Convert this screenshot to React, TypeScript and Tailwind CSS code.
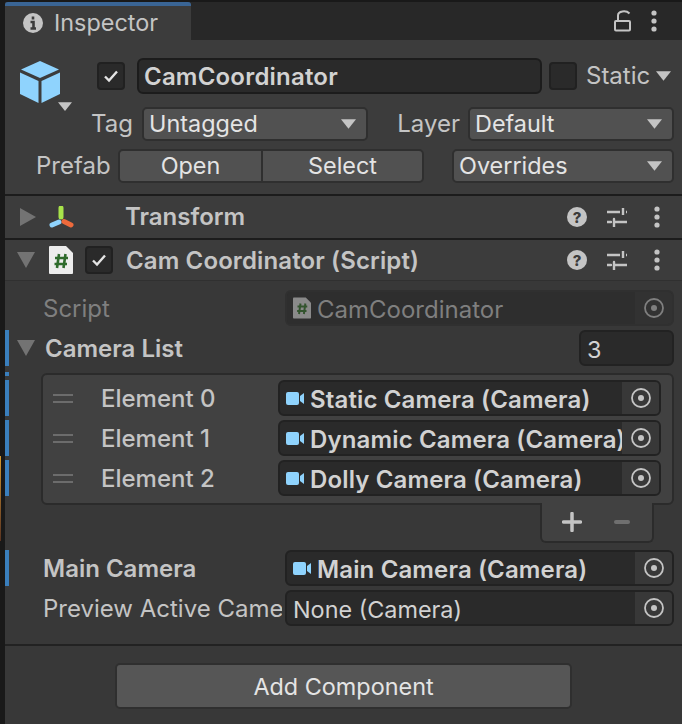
import type { ReactNode } from "react";

const Caret = ({ className }: { className: string }) => (
  <svg viewBox="0 0 16 10" className={className}>
    <path d="M0 0H16L8 10Z" fill="currentColor" />
  </svg>
);

const Fold = ({ open }: { open: boolean }) => (
  <svg viewBox="0 0 18 18" className="h-[18px] w-[18px] text-[#737373]">
    <path d={open ? "M0 1H18L9 17Z" : "M1 0L17 9L1 18Z"} fill="currentColor" />
  </svg>
);

const Check = ({ checked }: { checked: boolean }) => (
  <div className="flex h-7 w-7 shrink-0 items-center justify-center rounded-[4px] border-2 border-[#212121] bg-[#2a2a2a]">
    {checked && (
      <svg viewBox="0 0 16 14" className="h-[14px] w-4">
        <path d="M2 7.5L6 11.5L14 2.5" fill="none" stroke="#e4e4e4" strokeWidth="2.4" />
      </svg>
    )}
  </div>
);

const Kebab = () => (
  <svg viewBox="0 0 6 22" className="h-[22px] w-[6px]">
    <circle cx="3" cy="3" r="2.6" fill="#c4c4c4" />
    <circle cx="3" cy="11" r="2.6" fill="#c4c4c4" />
    <circle cx="3" cy="19" r="2.6" fill="#c4c4c4" />
  </svg>
);

const Lock = () => (
  <svg viewBox="0 0 18 22" className="h-[22px] w-[18px]" fill="none" stroke="#c4c4c4" strokeWidth="2">
    <rect x="1" y="11" width="15" height="9.5" rx="1" />
    <path d="M4 11V5.5C4 1 12 0 15.5 3.5" />
  </svg>
);

const HeaderIcons = () => (
  <div className="ml-auto flex items-center">
    <svg viewBox="0 0 20 20" className="h-5 w-5">
      <circle cx="10" cy="10" r="10" fill="#c4c4c4" />
      <text x="10" y="15.5" textAnchor="middle" fontSize="15" fontWeight="800" fill="#3c3c3c" fontFamily="Inter, sans-serif">
        ?
      </text>
    </svg>
    <svg viewBox="0 0 20 20" className="ml-5 h-5 w-5" stroke="#c4c4c4" strokeWidth="2.4" fill="none">
      <path d="M0 5H13M16 1V8M19 5H20" />
      <path d="M0 15H4M7 12V20M7 15H20" strokeLinecap="round" />
    </svg>
    <div className="mr-[22px] ml-[27px] flex">
      <Kebab />
    </div>
  </div>
);

const Picker = ({ dim }: { dim?: boolean }) => (
  <div className={`flex w-[37px] shrink-0 items-center justify-center self-stretch rounded-r-[4px] ${dim ? "bg-[#323232]" : "bg-[#383838]"}`}>
    <svg viewBox="0 0 20 20" className="h-5 w-5">
      <circle cx="10" cy="10" r="9" fill="none" stroke={dim ? "#7f7f7f" : "#c4c4c4"} strokeWidth="1.800" />
      <circle cx="10" cy="10" r="3" fill={dim ? "#7f7f7f" : "#c4c4c4"} />
    </svg>
  </div>
);

const CamIcon = () => (
  <svg viewBox="0 0 18 13" className="h-[13px] w-[18px] shrink-0">
    <rect x="0" y="0" width="13" height="13" rx="2" fill="#8fd3fd" />
    <path d="M14 4L18 1V12L14 9Z" fill="#8fd3fd" />
  </svg>
);

const ScriptIcon = ({ dim }: { dim?: boolean }) => (
  <svg viewBox="0 0 24 28" className={dim ? "h-[22px] w-[18px] shrink-0" : "h-7 w-6 shrink-0"}>
    <path d="M1 0H17L24 7V27Q24 28 23 28H1Q0 28 0 27V1Q0 0 1 0Z" fill={dim ? "#8a8a8a" : "#ededed"} />
    <path d="M10 8L8 22M16.500 8L14.500 22M6 12H19M5.500 18H18" stroke={dim ? "#33542e" : "#2f6b2c"} strokeWidth="2.600" fill="none" />
  </svg>
);

const Dropdown = ({ label, className }: { label: string; className: string }) => (
  <div className={`flex h-[34px] items-center justify-between rounded-[5px] border-2 border-[#2f2f2f] bg-[#515151] pr-[10px] pl-[5px] ${className}`}>
    <span className="text-[#e4e4e4]">{label}</span>
    <Caret className="h-[10px] w-[15px] text-[#c4c4c4]" />
  </div>
);

const ObjectField = ({
  icon,
  text,
  bold,
  width,
  dim,
}: {
  icon?: ReactNode;
  text: string;
  bold?: boolean;
  width: string;
  dim?: boolean;
}) => (
  <div className={`flex h-9 items-center rounded-[6px] border-2 ${dim ? "border-[#303030] bg-[#2e2e2e]" : "border-[#222222] bg-[#2a2a2a]"} ${width}`}>
    <div className="flex w-0 flex-1 items-center gap-[6px] pl-[6px] whitespace-nowrap">
      {icon}
      <span className={`pt-[4px] ${bold ? "text-[24px] font-semibold tracking-[0.14px]" : ""} ${dim ? "text-[24px] text-[#7f7f7f]" : "text-[#d2d2d2]"}`}>
        {text}
      </span>
    </div>
    <Picker dim={dim} />
  </div>
);

const ListRow = ({ label, value }: { label: string; value: string }) => (
  <div className="flex h-9 items-center">
    <div className="ml-[10px] flex w-5 flex-col gap-[5px]">
      <div className="h-[2px] bg-[#6c6c6c]" />
      <div className="h-[2px] bg-[#6c6c6c]" />
    </div>
    <span className="ml-[28px] w-[177px] pt-[2px] text-[24px] font-medium text-[#c4c4c4]">{label}</span>
    <ObjectField icon={<CamIcon />} text={value} width="w-[383px]" bold />
  </div>
);

const Bar = ({ className }: { className: string }) => <div className={`w-1 bg-[#3a7fbd] ${className}`} />;

export default function App() {
  return (
    <div className="flex h-[724px] w-[682px] overflow-hidden bg-[#191919] font-['Inter',sans-serif] text-[23.4px] leading-[30px] text-[#c4c4c4]">
      <div className="w-[5px] shrink-0 pt-[456px]">
        <div className="h-[85px] w-px bg-gradient-to-b from-[#d89a2c] to-[#5a3420]" />
      </div>
      <div className="flex min-w-0 flex-1 flex-col">
        <div className="mt-[2px] flex h-[38px] shrink-0 bg-[#282828]">
          <div className="flex w-[186px] flex-col rounded-t-[3px] bg-[#3c3c3c]">
            <div className="h-1 rounded-t-[3px] bg-[#3a6595]" />
            <div className="flex flex-1 items-center gap-[11px] pl-[18px]">
              <svg viewBox="0 0 20 20" className="h-5 w-5">
                <circle cx="10" cy="10" r="10" fill="#c4c4c4" />
                <path d="M10 3.500V6.500M7.500 9H10.500V15M7.500 15.500H13" stroke="#3c3c3c" strokeWidth="2.600" fill="none" />
              </svg>
              <span>Inspector</span>
            </div>
          </div>
          <div className="ml-auto flex items-center gap-[19px] pr-[25px]">
            <Lock />
            <Kebab />
          </div>
        </div>

        <div className="flex h-[156px] shrink-0 flex-col border-b-2 border-[#1c1c1c] bg-[#3c3c3c]">
          <div className="mt-[18px] flex h-9 items-center">
            <div className="relative mt-[12px] ml-[15px] h-[42px] w-[40px] shrink-0">
              <svg viewBox="0 0 40 42" className="h-[42px] w-[40px]">
                <path d="M20 0L39 8.500L20 17L1 8.500Z" fill="#8fd3fd" />
                <path d="M0 11.500L18.500 20V42L0 33Z" fill="#8fd3fd" />
                <path d="M21.500 20L40 11.500V33L21.500 42Z" fill="#8fd3fd" />
              </svg>
              <Caret className="absolute top-[41px] left-[38px] h-[9px] w-[14px] text-[#c4c4c4]" />
            </div>
            <div className="ml-[37px]">
              <Check checked />
            </div>
            <div className="ml-3 flex h-9 w-[405px] items-center rounded-[6px] border-2 border-[#1c1c1c] bg-[#2a2a2a] pt-[1px] pl-[5px] text-[24px] font-semibold tracking-[0.2px] text-[#d2d2d2]">
              CamCoordinator
            </div>
            <div className="ml-[7px]">
              <Check checked={false} />
            </div>
            <span className="ml-[9px] w-[64px] text-[24px]">Static</span>
            <Caret className="ml-[6px] h-[10px] w-[15px] text-[#c4c4c4]" />
          </div>

          <div className="mt-[13px] flex items-center">
            <span className="w-[128px] text-right text-[24px]">Tag</span>
            <Dropdown label="Untagged" className="ml-[9px] w-[226px]" />
            <span className="ml-[28px] w-[64px] text-right text-[24px]">Layer</span>
            <Dropdown label="Default" className="ml-2 w-[206px]" />
          </div>

          <div className="mt-2 flex items-center">
            <span className="ml-[31px] w-[82px] text-[24px]">Prefab</span>
            <div className="flex h-[34px] w-[306px] overflow-hidden rounded-[5px] border-2 border-[#2f2f2f] bg-[#515151] text-[#e4e4e4]">
              <div className="flex w-[143px] items-center justify-center border-r-2 border-[#2f2f2f]">Open</div>
              <div className="flex flex-1 items-center justify-center">Select</div>
            </div>
            <Dropdown label="Overrides" className="ml-7 w-[222px]" />
          </div>
        </div>

        <div className="flex h-[44px] shrink-0 items-center border-b-2 border-[#1c1c1c] bg-[#3c3c3c]">
          <div className="ml-[14px] flex w-[29px]">
            <Fold open={false} />
          </div>
          <svg viewBox="0 0 26 22" className="h-[22px] w-[26px]">
            <path d="M13 2V11" stroke="#a8e34a" strokeWidth="5" strokeLinecap="round" />
            <path d="M4 19L11 16" stroke="#8fd3fd" strokeWidth="5" strokeLinecap="round" />
            <path d="M16 15.500L23 19" stroke="#ee6a3c" strokeWidth="5" strokeLinecap="round" />
          </svg>
          <span className="ml-[51px] text-[24px] font-semibold">Transform</span>
          <HeaderIcons />
        </div>

        <div className="flex h-[41px] shrink-0 items-center border-b border-[#303030] bg-[#3c3c3c]">
          <div className="mr-[14px] ml-[12px] flex">
            <Fold open />
          </div>
          <ScriptIcon />
          <div className="ml-3">
            <Check checked />
          </div>
          <span className="ml-[13px] pt-[2px] text-[24px] font-semibold tracking-[0.12px]">Cam Coordinator (Script)</span>
          <HeaderIcons />
        </div>

        <div className="flex flex-1 flex-col bg-[#383838]">
          <div className="mt-[9px] flex items-center">
            <span className="ml-[38px] w-[242px] pt-[2px] text-[24px] text-[#7f7f7f]">Script</span>
            <ObjectField icon={<ScriptIcon dim />} text="CamCoordinator" width="w-[389px]" dim />
          </div>

          <div className="mt-1 flex h-9 items-center">
            <Bar className="h-9" />
            <div className="ml-2 flex">
              <Fold open />
            </div>
            <span className="ml-[10px] pt-[2px] text-[24px] font-semibold">Camera List</span>
            <div className="mr-2 ml-auto flex h-9 w-[95px] items-center rounded-[6px] border-2 border-[#222222] bg-[#2a2a2a] pt-[4px] pl-[6px] text-[#d2d2d2]">
              3
            </div>
          </div>

          <div className="flex">
            <div className="flex w-1 flex-col pt-[6px]">
              <Bar className="h-1" />
              <Bar className="mt-1 h-9" />
              <Bar className="mt-1 h-9" />
              <Bar className="mt-1 h-9" />
            </div>
            <div className="mt-[7px] ml-[32px] flex h-[132px] w-[633px] flex-col gap-1 rounded-[6px] border-2 border-[#2b2b2b] bg-[#414141] pt-[5px]">
              <ListRow label="Element 0" value="Static Camera (Camera)" />
              <ListRow label="Element 1" value="Dynamic Camera (Camera)" />
              <ListRow label="Element 2" value="Dolly Camera (Camera)" />
            </div>
          </div>

          <div className="-mt-[2px] ml-[535px] flex h-10 w-[114px] items-center rounded-b-[6px] border-2 border-t-0 border-[#2b2b2b] bg-[#414141] pl-[20px]">
            <svg viewBox="0 0 20 20" className="h-5 w-5">
              <path d="M1.500 10H18.500M10 1.500V18.500" stroke="#c4c4c4" strokeWidth="3.500" strokeLinecap="round" />
            </svg>
            <div className="ml-[32px] h-1 w-4 rounded-full bg-[#6f6f6f]" />
          </div>

          <div className="mt-[7px] flex h-9 items-center">
            <Bar className="h-9" />
            <span className="ml-[34px] w-[242px] pt-[2px] text-[24px] font-semibold">Main Camera</span>
            <ObjectField icon={<CamIcon />} text="Main Camera (Camera)" width="w-[389px]" bold />
          </div>

          <div className="mt-1 flex items-center">
            <span className="ml-[38px] h-[32px] w-[239px] overflow-hidden pt-[2px] text-[24px] whitespace-nowrap">Preview Active Camera</span>
            <div className="ml-[3px]">
              <ObjectField text="None (Camera)" width="w-[389px]" />
            </div>
          </div>

          <div className="mt-[18px] h-[2px] bg-[#222222]" />

          <div className="mt-[17px] ml-[110px] flex h-[46px] w-[457px] items-center justify-center rounded-[5px] border-2 border-[#2f2f2f] bg-[#565656] pt-[1px] text-[#e4e4e4]">
            Add Component
          </div>
        </div>
      </div>
    </div>
  );
}
